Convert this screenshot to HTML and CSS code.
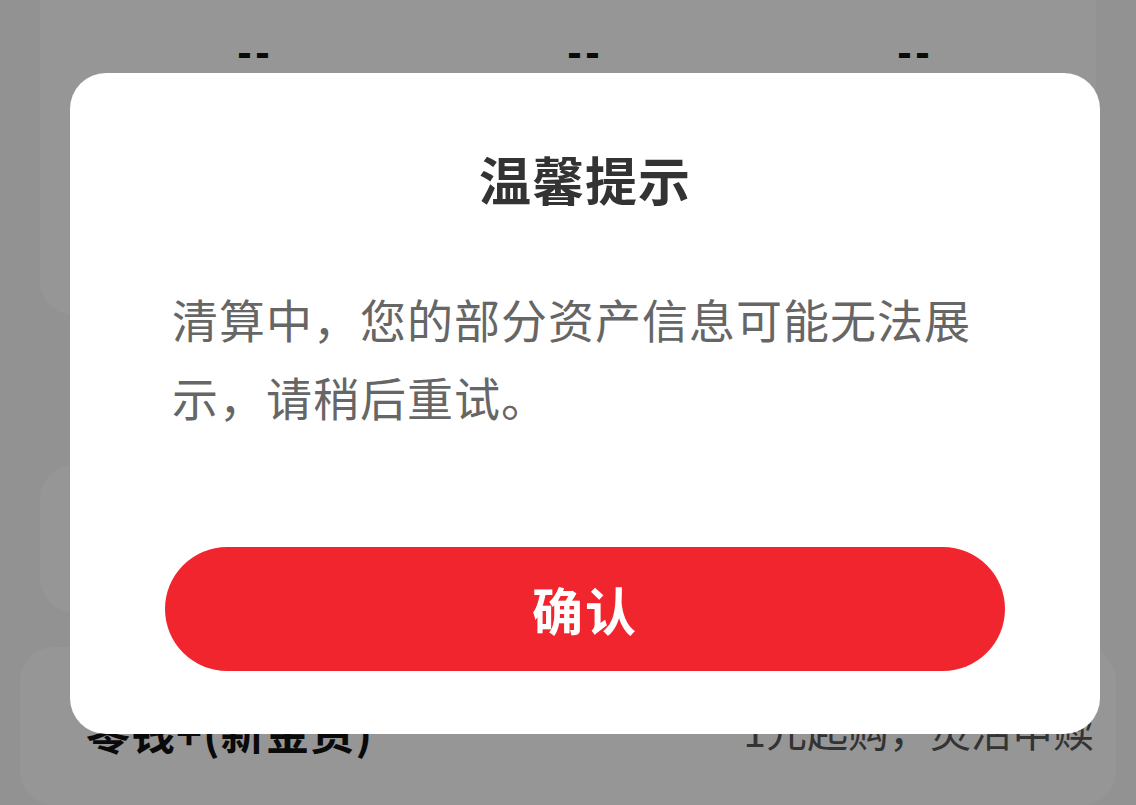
FILE: index.html
```html
<!DOCTYPE html>
<html lang="zh-CN">
<head>
  <meta charset="UTF-8" />
  <meta name="viewport" content="width=device-width, initial-scale=1.0" />
  <title>温馨提示</title>
  <link rel="stylesheet" href="styles.css">
</head>
<body>
  <main class="page">
    <section class="card card-stats">
      <div class="stat">--</div>
      <div class="stat">--</div>
      <div class="stat">--</div>
    </section>

    <section class="card card-mid"></section>

    <section class="card card-product">
      <span class="product-name">零钱+(新金资)</span>
      <span class="product-desc">1元起购，灵活申赎</span>
    </section>
  </main>

  <div class="mask">
    <div class="dialog">
      <h2 class="dialog-title">温馨提示</h2>
      <p class="dialog-text">清算中，您的部分资产信息可能无法展示，请稍后重试。</p>
      <button class="dialog-btn">确认</button>
    </div>
  </div>
</body>
</html>
```

FILE: styles.css
```css
body {
  margin: 0;
  padding: 0;
  background: #f4f4f4;
  font-family: "Noto Sans CJK SC", "Noto Sans", sans-serif;
  overflow: hidden;
}
.page {
  height: 805px;
  display: flex;
  flex-direction: column;
}
.card {
  background: #fbfbfb;
  border-radius: 34px;
}
.card-stats {
  margin: -60px 40px 0;
  height: 380px;
  padding: 0 16px 0 50px;
  display: grid;
  grid-template-columns: repeat(3, 330px);
  align-items: start;
}
.stat {
  padding-top: 92px;
  text-align: center;
  font-family: "DejaVu Sans", sans-serif;
  font-size: 36px;
  font-weight: 600;
  letter-spacing: 3px;
  color: #111;
  line-height: 44px;
}
.card-mid {
  margin: 150px 40px 0;
  height: 150px;
}
.card-product {
  margin: 35px 20px 0;
  height: 160px;
  padding: 0 22px 0 66px;
  display: flex;
  justify-content: space-between;
  align-items: flex-start;
}
.product-name {
  padding-top: 52px;
  font-size: 44px;
  font-weight: bold;
  letter-spacing: 1px;
  color: #111;
}
.product-desc {
  padding-top: 52px;
  font-size: 41px;
  color: #555;
}
.mask {
  position: fixed;
  inset: 0;
  background: rgba(0, 0, 0, 0.4);
  display: flex;
  justify-content: center;
  align-items: flex-start;
}
.dialog {
  margin-top: 73px;
  margin-left: 34px;
  width: 1030px;
  height: 661px;
  box-sizing: border-box;
  background: #fff;
  border-radius: 36px;
  padding: 70px 95px 0;
  display: flex;
  flex-direction: column;
}
.dialog-title {
  margin: 0;
  text-align: center;
  font-size: 52px;
  line-height: 72px;
  font-weight: bold;
  letter-spacing: 1px;
  color: #333;
}
.dialog-text {
  margin: 64px 7px 0;
  font-size: 46px;
  line-height: 78px;
  letter-spacing: 1px;
  color: #666;
}
.dialog-btn {
  margin-top: 112px;
  height: 124px;
  border: none;
  border-radius: 62px;
  background: #f1252e;
  color: #fff;
  font-family: inherit;
  font-size: 51px;
  font-weight: bold;
  letter-spacing: 2px;
}
```
